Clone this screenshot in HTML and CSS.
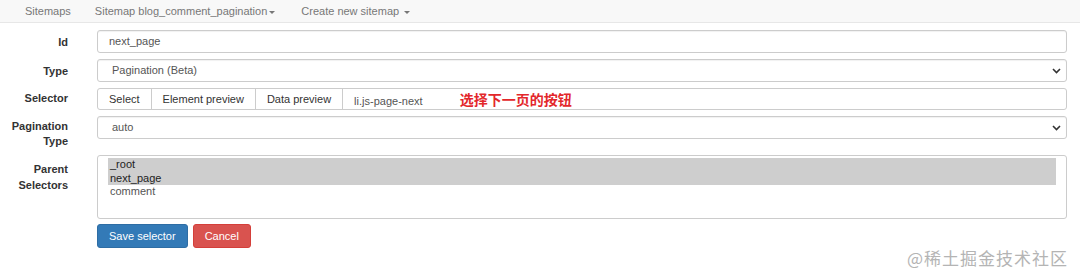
FILE: index.html
```html
<!DOCTYPE html>
<html lang="en">
<head>
    <meta charset="UTF-8">
    <meta name="viewport" content="width=device-width, initial-scale=1.0">
    <title>Edit selector</title>
    <link rel="stylesheet" href="styles.css">
</head>
<body>
    <nav class="navbar">
        <a class="nav-link nav-first">Sitemaps</a>
        <a class="nav-link">Sitemap blog_comment_pagination<span class="caret"></span></a>
        <a class="nav-link">Create new sitemap <span class="caret"></span></a>
    </nav>

    <form class="selector-form">
        <label class="form-label">Id</label>
        <div class="form-control">next_page</div>

        <label class="form-label">Type</label>
        <div class="form-control form-select">
            Pagination (Beta)
            <svg class="chevron" width="9" height="6" viewBox="0 0 9 6"><path d="M1 1l3.5 3.5L8 1" fill="none" stroke="#333" stroke-width="1.6"/></svg>
        </div>

        <label class="form-label label-top">Selector</label>
        <div class="input-group">
            <span class="group-btn">Select</span>
            <span class="group-btn">Element preview</span>
            <span class="group-btn">Data preview</span>
            <div class="group-input">
                li.js-page-next
                <span class="annotation">选择下一页的按钮</span>
            </div>
        </div>

        <label class="form-label label-top">Pagination<br>Type</label>
        <div class="form-control form-select">
            auto
            <svg class="chevron" width="9" height="6" viewBox="0 0 9 6"><path d="M1 1l3.5 3.5L8 1" fill="none" stroke="#333" stroke-width="1.6"/></svg>
        </div>

        <label class="form-label label-parent">Parent<br>Selectors</label>
        <div class="listbox">
            <div class="option selected">_root</div>
            <div class="option selected">next_page</div>
            <div class="option">comment</div>
        </div>

        <span></span>
        <div class="actions">
            <button type="button" class="btn btn-primary">Save selector</button>
            <button type="button" class="btn btn-danger">Cancel</button>
        </div>
    </form>

    <div class="watermark">@稀土掘金技术社区</div>
</body>
</html>
```

FILE: styles.css
```css
body {
    font-family: 'Liberation Sans', Arial, 'Noto Sans CJK SC', sans-serif;
    font-size: 11px;
    color: #333;
    background: #fff;
    margin: 0;
    height: 280px;
    position: relative;
    overflow: hidden;
}
.navbar {
    display: flex;
    align-items: center;
    height: 22px;
    background: #f8f8f8;
    border-bottom: 1px solid #e7e7e7;
    padding-left: 10px;
}
.nav-link {
    color: #777;
    padding: 0 13px;
    line-height: 22px;
}
.nav-first {
    padding: 0 11px 0 15px;
}
.caret {
    display: inline-block;
    width: 0;
    height: 0;
    margin-left: 2px;
    vertical-align: middle;
    border-top: 3px solid #777;
    border-left: 3px solid transparent;
    border-right: 3px solid transparent;
}
.selector-form {
    display: grid;
    grid-template-columns: 68px 1fr;
    column-gap: 29px;
    row-gap: 6px;
    padding: 7px 13px 0 0;
}
.form-label {
    text-align: right;
    font-weight: bold;
    line-height: 15px;
    padding-top: 5px;
}
.label-top {
    padding-top: 3px;
}
.label-parent {
    line-height: 16px;
    padding-top: 6px;
}
.form-control {
    position: relative;
    height: 23px;
    line-height: 21px;
    box-sizing: border-box;
    border: 1px solid #ccc;
    border-radius: 3px;
    padding: 0 11px;
    color: #555;
    box-shadow: inset 0 1px 1px rgba(0, 0, 0, 0.06);
}
.form-select {
    padding-left: 14px;
}
.chevron {
    position: absolute;
    right: 5px;
    top: 8px;
}
.input-group {
    display: flex;
    height: 22px;
    box-sizing: border-box;
    border: 1px solid #ccc;
    border-radius: 3px;
    line-height: 20px;
}
.group-btn {
    padding: 0 11px;
    border-right: 1px solid #ccc;
    color: #333;
}
.group-input {
    flex: 1;
    padding-left: 11px;
    color: #555;
}
.annotation {
    margin-left: 34px;
    color: #e3272b;
    font-size: 14px;
    font-weight: bold;
    font-family: 'Noto Sans CJK SC', sans-serif;
}
.listbox {
    height: 64px;
    box-sizing: border-box;
    border: 1px solid #ccc;
    border-radius: 3px;
    padding: 2px 10px;
    color: #555;
}
.option {
    line-height: 13.5px;
    padding-left: 2px;
}
.option.selected {
    background: #cecece;
    color: #222;
}
.actions {
    display: flex;
    gap: 5px;
    margin-top: -1px;
}
.btn {
    font-family: inherit;
    font-size: 11px;
    color: #fff;
    height: 24px;
    border: 1px solid transparent;
    border-radius: 3px;
    padding: 0 11px;
    cursor: pointer;
}
.btn-primary {
    background: #337ab7;
    border-color: #2e6da4;
}
.btn-danger {
    background: #d9534f;
    border-color: #d43f3a;
}
.watermark {
    position: absolute;
    right: 12px;
    bottom: 10px;
    font-family: 'Noto Sans CJK SC', sans-serif;
    font-size: 17px;
    letter-spacing: 1px;
    color: #b4b4b4;
}
```
